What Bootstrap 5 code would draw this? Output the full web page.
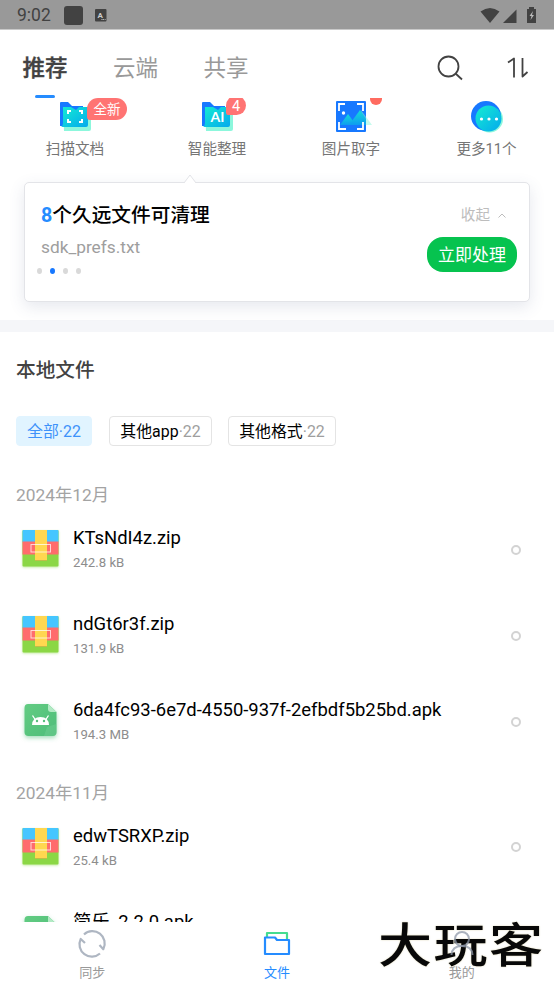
<!DOCTYPE html>
<html lang="zh-CN">
<head>
<meta charset="utf-8">
<meta name="viewport" content="width=device-width, initial-scale=1">
<title>本地文件</title>
<link href="https://cdn.jsdelivr.net/npm/bootstrap@5.3.0/dist/css/bootstrap.min.css" rel="stylesheet">
<style>
body{font-family:Roboto,"Noto Sans CJK SC",sans-serif;background:#fff;color:#000;overflow:hidden}
svg{display:block;flex:none;overflow:visible}
.screen{height:984px}
.statusbar{height:30px;background:#999;border-bottom:1px solid #c9c9c9;color:#424242;font-size:17.5px;padding:2px 16px 0 17px}
.status-left{margin-left:13px}
.topbar{height:68px;padding:0 26px 0 22.5px}
.tab-item{font-size:22.5px;line-height:34px;color:#999;height:68px;padding-top:21px}
.tab-item.on{color:#424242;font-weight:500;-webkit-text-stroke:.35px #424242}
.tab-item.on::after{content:"";display:block;width:20px;height:3px;border-radius:2px;background:#258cff;margin:10px auto 0}
.tab-item+.tab-item{margin-left:45.5px}
.find{margin-top:25px}
.sort{margin:27px 0 0 44px}
.shortcuts{height:84px;overflow:hidden;padding-left:8px}
.shortcut{flex:0 0 134px;font-size:14.6px;line-height:22px;color:#757575;padding-top:3px}
.shortcut .cap{margin-top:7px}
.shortcut .cap.tall{margin-top:5px}
.shortcut-more{margin-left:1.5px}
.tip{background:#ff7473;color:#fff;left:79px;top:0;height:22px;width:40px;font-size:13.5px;line-height:22px;border-radius:11px 11px 11px 3px}
.tip-num{left:76px;top:-2px;width:20px;height:19px;border-radius:10px 10px 10px 3px;line-height:21px;font-size:14.5px}
.tip-dot{left:86px;top:-5px;width:12px;height:12px;border-radius:50%;background:#ff6b60}
.notice{margin:0 24px;width:506px;height:120px;border:1px solid #e3e4e8;border-radius:5px;box-shadow:0 5px 16px rgba(60,80,120,.13);padding:21px 12px 0 16px;background:#fff}
.pointer{left:158px;top:-9px}
.notice-title{font-size:19.7px;line-height:24px;font-weight:500}
.notice-title b{color:#258cff;font-weight:700}
.notice-file{font-size:17.3px;line-height:22px;color:#9e9e9e;margin-top:8px}
.dots{gap:8px;margin:10px 0 0 -4px}
.dots i{width:5px;height:6px;border-radius:50%;background:#d9d9d9}
.dots i.on{background:#1778ff}
.fold{font-size:14.6px;line-height:20px;color:#bdbdbd;margin:1px 11px 0 0}
.go{width:90px;height:35px;background:#06c34f;color:#fff;border:0;border-radius:16px;font-size:17px;padding:0;margin-top:12px;line-height:34px}
.go:hover{background:#06c34f;color:#fff}
.band{height:12px;background:#f5f6f9;margin-top:18px}
.heading{font-size:19.7px;line-height:28px;font-weight:500;color:#424242;padding:25px 0 0 16px}
.chips{margin:31px 0 0 16px;font-size:15.9px;line-height:29px}
.chip{height:30px;border:1px solid #e4e4e4;border-radius:4px;text-align:center;white-space:nowrap}
.chip span{color:#9e9e9e}
.chip.on{background:#e1f4ff;border-color:#e1f4ff;color:#3d92fa;width:76px}
.chip-app{width:103px;margin-left:17px}
.chip-format{width:108px;margin-left:16px}
.list{height:476px;overflow:hidden}
.month{font-size:17.35px;line-height:24px;color:#a3a3a3;padding:37px 0 0 16px;height:80px}
.month.later{margin-top:-40.4px}
.file{height:86px;padding:0 33px 0 22px}
.file-name{font-size:18.45px;line-height:24px}
.file-size{font-size:13.2px;line-height:18px;color:#8d8d8d;margin-top:4px}
.ico{width:37px;margin:4px 14px 0 0}
.pick{width:10px;height:10px;border:2px solid #d3d3d3;border-radius:50%;margin-top:18.5px}
.tabbar{height:62px;background:#fff}
.tabbar>div{width:184.67px;font-size:13px;line-height:18px;color:#999;padding-top:8px}
.tabbar>.on{color:#258cff}
.tabbar svg{margin-bottom:6px;height:28px}
.brand{left:378px;top:904px;font:500 54px/76px "Noto Sans CJK SC",sans-serif;color:#080808;letter-spacing:1.5px;text-shadow:0 0 2px #d8d1ac;z-index:1;transform:scaleY(.87)}
.over{z-index:2}
</style>
</head>
<body>
<svg width="0" height="0" class="position-absolute">
<defs>
<linearGradient id="teal" x1="0" y1="0" x2="1" y2="1"><stop stop-color="#14edd1"/><stop offset="1" stop-color="#04a9ee"/></linearGradient>
<linearGradient id="peak" x1="0" y1="0" x2="0" y2="1"><stop stop-color="#14dcd9"/><stop offset="1" stop-color="#0e9cf0"/></linearGradient>
<linearGradient id="apkfill" x1="0" y1="0" x2="1" y2="1"><stop stop-color="#62cc82"/><stop offset="1" stop-color="#4ebd79"/></linearGradient>
<filter id="glow" x="-30%" y="-30%" width="160%" height="170%"><feDropShadow dx="0" dy="2" stdDeviation="2" flood-color="#4ebd79" flood-opacity=".5"/></filter>
<filter id="zipglow" x="-20%" y="-20%" width="140%" height="140%"><feDropShadow dx="0" dy="1" stdDeviation="1" flood-color="#8bd744" flood-opacity=".5"/></filter>
</defs>
<symbol id="folder" viewBox="0 0 32 30"><path d="M1 2Q1 1 2 1H9L13 5H24V25H1Z" fill="#1778ff"/><path d="M4 9H32V28Q32 30 30 30H5Z" fill="#8cf7dc"/><path d="M4 6H12L17 9L20 6H29V24Q29 26 27 26H2Q4 25 4 22Z" fill="url(#teal)"/></symbol>
<symbol id="zip" viewBox="0 0 37 38" overflow="visible"><rect x=".5" y="0" width="36" height="36.500" rx="1" fill="#8bd744" filter="url(#zipglow)"/><path d="M.5 12V1Q.5 0 1.500 0H35.500Q36.500 0 36.500 1V12Z" fill="#45c6ff"/><path d="M.5 11.500H36.500V24.500H.5Z" fill="#ff6c6c"/><path d="M13 0H25V30.500H13Z" fill="#ffd750"/><path d="M13 30.500H25" stroke="#c0bd48"/><rect x="9" y="14.500" width="19.500" height="7.500" fill="none" stroke="#fff" stroke-opacity=".72"/></symbol>
<symbol id="apk" viewBox="0 0 37 38" overflow="visible"><path d="M6 1H26L34.500 9V29Q34.500 33 30.500 33H6.500Q2.500 33 2.500 29V5Q2.500 1 6 1Z" fill="url(#apkfill)" filter="url(#glow)"/><path d="M26 1L34.500 9H29Q26 9 26 6Z" fill="#b2eac4"/><path d="M22 33L25 24L34.500 21V29Q34.500 33 30.500 33Z" fill="#79d399" opacity=".4"/><path d="M10 22Q10.500 14 18.500 14Q26.500 14 27 22Z" fill="#fff"/><path d="M10.500 12.500L13.500 17M26.500 12.500L23.500 17" stroke="#fff" stroke-width="1.300"/><circle cx="15" cy="18" r="1.200" fill="#55be7b"/><circle cx="22" cy="18" r="1.200" fill="#55be7b"/></symbol>
</svg>

<div class="screen d-flex flex-column position-relative">
<header class="statusbar d-flex align-items-center flex-shrink-0">
<span>9:02</span>
<svg class="status-left me-auto" width="44" height="20" viewBox="0 0 44 20"><rect x="0" y="0" width="19" height="19" rx="3" fill="#424242"/><rect x="31" y="3" width="11.500" height="12.500" rx="1" fill="#424242"/><text x="33.500" y="12" font-size="8" font-weight="700" fill="#ccc">A</text><path d="M37.500 13.500H41.500" stroke="#ccc" stroke-dasharray="1 .7"/></svg>
<svg width="58" height="18" viewBox="0 0 58 18"><path d="M.5 4.500Q10 -2.500 19.500 4.500L10 16Z" fill="#424242"/><path d="M23 16H36.500V2.500Z" fill="#424242"/><path d="M47 2H49V0H54V2H56V16H47Z" fill="#424242"/><path d="M53 4L49.500 9H51.500L50.500 13L54 8H52Z" fill="#bbb"/></svg>
</header>

<nav class="topbar d-flex flex-shrink-0">
<div class="tab-item on">推荐</div><div class="tab-item">云端</div><div class="tab-item">共享</div>
<svg class="find ms-auto" width="26" height="26" viewBox="0 0 26 26" fill="none" stroke="#424242" stroke-width="1.800"><circle cx="11.500" cy="11.500" r="10"/><path d="M18.500 18.500L25 24.500"/></svg>
<svg class="sort" width="21" height="22" viewBox="0 0 21 22" fill="none" stroke="#424242" stroke-width="1.800" stroke-linejoin="round"><path d="M1 5.500L7 1.500V20.500M15.500 1V19.500L20.500 15"/></svg>
</nav>

<section class="shortcuts d-flex flex-shrink-0">
<div class="shortcut d-flex flex-column align-items-center position-relative">
<svg width="32" height="30"><use href="#folder"/><path d="M9 13V10H12M20 10H23V13M23 18V21H20M12 21H9V18" fill="none" stroke="#fff" stroke-width="2"/></svg><div class="cap">扫描文档</div><span class="tip position-absolute text-center">全新</span></div>
<div class="shortcut d-flex flex-column align-items-center position-relative ms-2">
<svg width="32" height="30"><use href="#folder"/><text x="9.500" y="21" fill="#fff" font-family="Lato" font-size="14" font-weight="700">AI</text></svg><div class="cap">智能整理</div><span class="tip tip-num position-absolute text-center">4</span></div>
<div class="shortcut d-flex flex-column align-items-center position-relative">
<svg width="32" height="32" viewBox="0 0 32 32"><rect x="1" width="30" height="31" rx="1" fill="#1778ff"/><path d="M26 9L37 24H28Z" fill="#8cf7dc" opacity=".5"/><path d="M5 24L13 13L21 24Z" fill="url(#peak)"/><path d="M14 24L25 9L31 18V24Z" fill="url(#peak)"/><path d="M10 3H4V10M22 3H28V10M4 21V28H11M22 28H28V21" fill="none" stroke="#fff" stroke-width="1.800"/><circle cx="8.500" cy="12" r="1.700" fill="#fff"/></svg><div class="cap tall">图片取字</div><span class="tip-dot position-absolute"></span></div>
<div class="shortcut shortcut-more d-flex flex-column align-items-center position-relative">
<svg width="32" height="32" viewBox="0 0 32 32"><circle cx="18.500" cy="18" r="13.500" fill="#8cf7dc"/><circle cx="15" cy="15" r="15" fill="#1778ff"/><circle cx="17.500" cy="17.500" r="13" fill="url(#teal)"/><g fill="#fff"><circle cx="10.500" cy="18" r="1.600"/><circle cx="18" cy="18" r="1.600"/><circle cx="25.500" cy="18" r="1.600"/></g></svg><div class="cap tall">更多11个</div></div>
</section>

<section class="notice d-flex justify-content-between flex-shrink-0 position-relative">
<svg class="pointer position-absolute" width="14" height="10" viewBox="0 0 14 10"><path d="M1 9L7 1L13 9V10H1Z" fill="#fff"/><path d="M1 9L7 1L13 9" fill="none" stroke="#e3e4e8"/></svg>
<div><div class="notice-title"><b>8</b>个久远文件可清理</div><div class="notice-file">sdk_prefs.txt</div><div class="dots d-flex"><i></i><i class="on"></i><i></i><i></i></div></div>
<div class="d-flex flex-column align-items-end"><div class="fold d-flex align-items-center">收起<svg class="ms-2" width="8" height="5" viewBox="0 0 8 5"><path d="M.5 4.500L4 1L7.500 4.500" fill="none" stroke="#bdbdbd"/></svg></div><button class="btn go">立即处理</button></div>
</section>
<div class="band flex-shrink-0"></div>

<main class="flex-shrink-0">
<h1 class="heading mb-0">本地文件</h1>
<div class="chips d-flex"><div class="chip on">全部·22</div><div class="chip chip-app">其他app<span>·22</span></div><div class="chip chip-format">其他格式<span>·22</span></div></div>
<div class="list">
<div class="month">2024年12月</div>
<div class="file d-flex"><svg class="ico" height="38"><use href="#zip"/></svg><div class="flex-grow-1"><div class="file-name">KTsNdI4z.zip</div><div class="file-size">242.8 kB</div></div><div class="pick"></div></div>
<div class="file d-flex"><svg class="ico" height="38"><use href="#zip"/></svg><div class="flex-grow-1"><div class="file-name">ndGt6r3f.zip</div><div class="file-size">131.9 kB</div></div><div class="pick"></div></div>
<div class="file d-flex"><svg class="ico" height="38"><use href="#apk" y="1"/></svg><div class="flex-grow-1"><div class="file-name">6da4fc93-6e7d-4550-937f-2efbdf5b25bd.apk</div><div class="file-size">194.3 MB</div></div><div class="pick"></div></div>
<div class="month later">2024年11月</div>
<div class="file d-flex"><svg class="ico" height="38"><use href="#zip"/></svg><div class="flex-grow-1"><div class="file-name">edwTSRXP.zip</div><div class="file-size">25.4 kB</div></div><div class="pick"></div></div>
<div class="file d-flex"><svg class="ico" height="38"><use href="#apk" y="1"/></svg><div class="file-name">简乐_2.2.0.apk</div></div>
</div>
</main>

<footer class="tabbar d-flex flex-shrink-0">
<div class="d-flex flex-column align-items-center"><svg width="28" height="28" viewBox="0 0 28 28" fill="none" stroke="#aeb6c2" stroke-width="2.200" stroke-linejoin="round"><path d="M6 4.500A12.300 12.300 0 0 1 25.300 19.200L21.500 15M22 23.500A12.300 12.300 0 0 1 2.700 9L7 13"/></svg>同步</div>
<div class="on d-flex flex-column align-items-center"><svg width="28" height="28" viewBox="0 0 28 28" fill="none" stroke-width="2.200" stroke-linejoin="round"><path d="M4 7V3H24V10" stroke="#45dc91"/><path d="M2 7.500H12L14 10H26V24H2Z" stroke="#258cff"/></svg>文件</div>
<div class="d-flex flex-column align-items-center"><svg class="over position-relative" width="28" height="28" viewBox="0 0 28 28" fill="none" stroke="#8f98a8" stroke-width="2" stroke-opacity=".75"><circle cx="14" cy="9" r="7"/><path d="M3.500 25Q4 16 14 16Q24 16 24.500 25"/></svg><span class="over position-relative">我的</span></div>
</footer>
<div class="brand position-absolute">大玩客</div>
</div>
<script src="https://cdn.jsdelivr.net/npm/bootstrap@5.3.0/dist/js/bootstrap.bundle.min.js"></script>
</body>
</html>
